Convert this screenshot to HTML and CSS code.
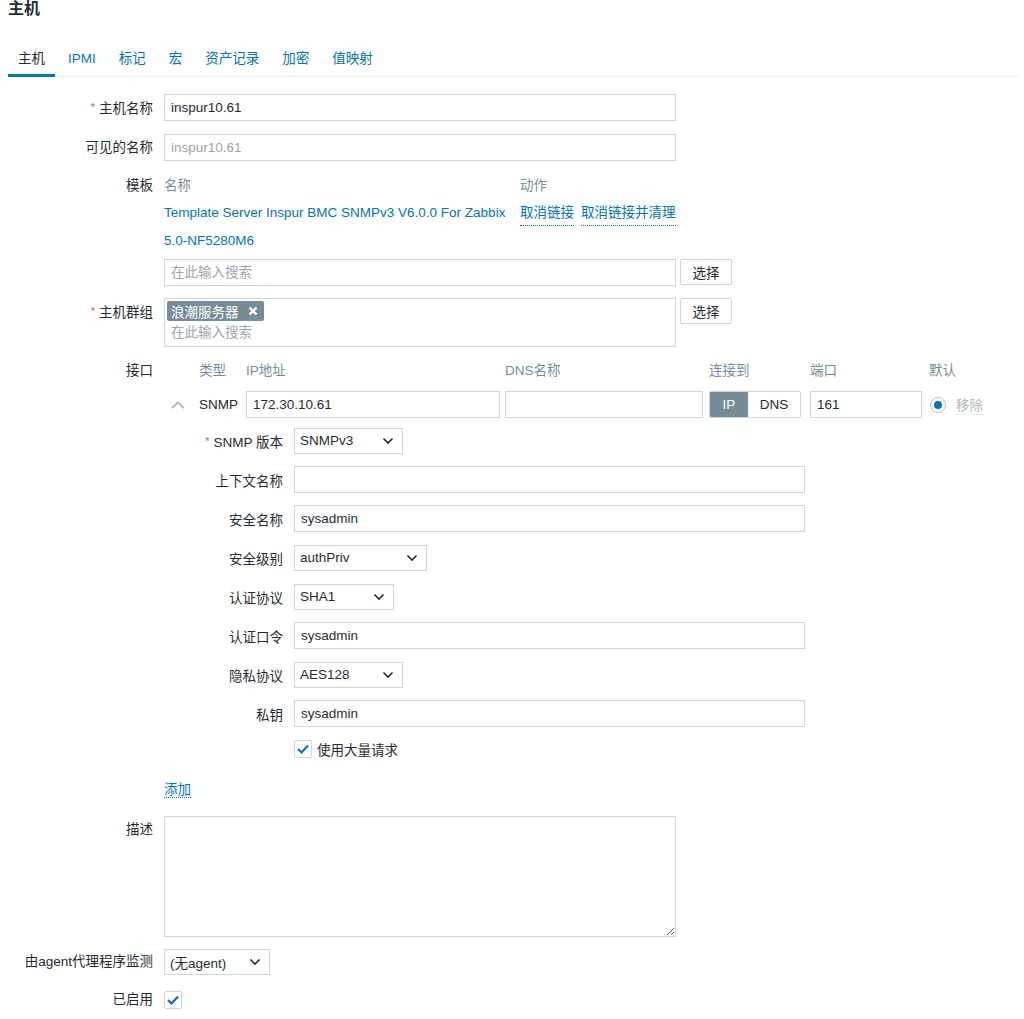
FILE: index.html
```html
<!DOCTYPE html>
<html lang="zh-CN">
<head>
    <meta charset="UTF-8">
    <title>主机</title>
    <link rel="stylesheet" href="styles.css">
</head>
<body>
<div class="page">
    <h1 class="title">主机</h1>

    <ul class="tabs">
        <li class="active">主机</li>
        <li>IPMI</li>
        <li>标记</li>
        <li>宏</li>
        <li>资产记录</li>
        <li>加密</li>
        <li>值映射</li>
    </ul>

    <form class="form">
        <div class="row">
            <label class="label"><span class="req">*</span>主机名称</label>
            <div class="field"><input type="text" class="text w512" value="inspur10.61"></div>
        </div>

        <div class="row">
            <label class="label">可见的名称</label>
            <div class="field"><input type="text" class="text w512" placeholder="inspur10.61"></div>
        </div>

        <div class="row">
            <label class="label label-top">模板</label>
            <div class="field">
                <div class="tpl-head">
                    <span class="tpl-name">名称</span>
                    <span>动作</span>
                </div>
                <div class="tpl-row">
                    <span class="tpl-name"><a class="link">Template Server Inspur BMC SNMPv3 V6.0.0 For Zabbix 5.0-NF5280M6</a></span>
                    <span class="tpl-actions">
                        <a class="link dotted">取消链接</a>
                        <a class="link dotted">取消链接并清理</a>
                    </span>
                </div>
                <div class="with-btn tpl-search">
                    <input type="text" class="text w512" placeholder="在此输入搜索">
                    <button type="button" class="btn">选择</button>
                </div>
            </div>
        </div>

        <div class="row">
            <label class="label"><span class="req">*</span>主机群组</label>
            <div class="field with-btn">
                <div class="multiselect">
                    <span class="tag">浪潮服务器
                        <svg width="10" height="10" viewBox="0 0 10 10"><path d="M1.5 1.5 L8.5 8.5 M8.5 1.5 L1.5 8.5" stroke="#fff" stroke-width="2.4"/></svg>
                    </span>
                    <input type="text" class="ms-input" placeholder="在此输入搜索">
                </div>
                <button type="button" class="btn">选择</button>
            </div>
        </div>

        <div class="row row-iface">
            <label class="label label-head">接口</label>
            <div class="field">
                <div class="iface iface-head">
                    <span></span>
                    <span>类型</span>
                    <span>IP地址</span>
                    <span>DNS名称</span>
                    <span>连接到</span>
                    <span>端口</span>
                    <span>默认</span>
                </div>
                <div class="iface">
                    <span class="chev">
                        <svg width="16" height="10" viewBox="0 0 16 10"><path d="M2 8 L8 2.5 L14 8" fill="none" stroke="#acbbc2" stroke-width="2"/></svg>
                    </span>
                    <span>SNMP</span>
                    <input type="text" class="text w254" value="172.30.10.61">
                    <input type="text" class="text w198">
                    <span class="toggle"><span class="on">IP</span><span>DNS</span></span>
                    <input type="text" class="text w112" value="161">
                    <span class="default">
                        <span class="radio"></span>
                        <a class="remove">移除</a>
                    </span>
                </div>

                <div class="snmp">
                    <div class="srow">
                        <label class="slabel"><span class="req">*</span>SNMP 版本</label>
                        <div class="select w109"><span>SNMPv3</span><svg width="12" height="8" viewBox="0 0 12 8"><path d="M1.5 1.5 L6 6 L10.5 1.5" fill="none" stroke="#1f2c33" stroke-width="1.6"/></svg></div>
                    </div>
                    <div class="srow">
                        <label class="slabel">上下文名称</label>
                        <input type="text" class="text w511">
                    </div>
                    <div class="srow">
                        <label class="slabel">安全名称</label>
                        <input type="text" class="text w511" value="sysadmin">
                    </div>
                    <div class="srow">
                        <label class="slabel">安全级别</label>
                        <div class="select w133"><span>authPriv</span><svg width="12" height="8" viewBox="0 0 12 8"><path d="M1.5 1.5 L6 6 L10.5 1.5" fill="none" stroke="#1f2c33" stroke-width="1.6"/></svg></div>
                    </div>
                    <div class="srow">
                        <label class="slabel">认证协议</label>
                        <div class="select w100"><span>SHA1</span><svg width="12" height="8" viewBox="0 0 12 8"><path d="M1.5 1.5 L6 6 L10.5 1.5" fill="none" stroke="#1f2c33" stroke-width="1.6"/></svg></div>
                    </div>
                    <div class="srow">
                        <label class="slabel">认证口令</label>
                        <input type="text" class="text w511" value="sysadmin">
                    </div>
                    <div class="srow">
                        <label class="slabel">隐私协议</label>
                        <div class="select w109"><span>AES128</span><svg width="12" height="8" viewBox="0 0 12 8"><path d="M1.5 1.5 L6 6 L10.5 1.5" fill="none" stroke="#1f2c33" stroke-width="1.6"/></svg></div>
                    </div>
                    <div class="srow">
                        <label class="slabel">私钥</label>
                        <input type="text" class="text w511" value="sysadmin">
                    </div>
                    <div class="srow srow-check">
                        <span></span>
                        <span class="check-line">
                            <span class="checkbox"><svg width="14" height="12" viewBox="0 0 14 12"><path d="M2 6 L5.5 9.5 L12 2.5" fill="none" stroke="#0275b8" stroke-width="2.2"/></svg></span>
                            使用大量请求
                        </span>
                    </div>
                </div>

                <div class="add"><a class="link dotted">添加</a></div>
            </div>
        </div>

        <div class="row">
            <label class="label">描述</label>
            <div class="field"><textarea class="textarea"></textarea></div>
        </div>

        <div class="row">
            <label class="label label-26">由agent代理程序监测</label>
            <div class="field">
                <div class="select w106"><span>(无agent)</span><svg width="12" height="8" viewBox="0 0 12 8"><path d="M1.5 1.5 L6 6 L10.5 1.5" fill="none" stroke="#1f2c33" stroke-width="1.6"/></svg></div>
            </div>
        </div>

        <div class="row row-last">
            <label class="label label-26">已启用</label>
            <div class="field field-center">
                <span class="checkbox"><svg width="14" height="12" viewBox="0 0 14 12"><path d="M2 6 L5.5 9.5 L12 2.5" fill="none" stroke="#0275b8" stroke-width="2.2"/></svg></span>
            </div>
        </div>
    </form>
</div>
</body>
</html>
```

FILE: styles.css
```css
/* Host edit form */
* {
    margin: 0;
    padding: 0;
    box-sizing: border-box;
}

body {
    font-family: "Liberation Sans", Arial, "Noto Sans CJK SC", sans-serif;
    font-size: 13.5px;
    color: #1f2c33;
    background-color: #ffffff;
}

.page {
    padding: 0 4px 0 8px;
}

.title {
    font-size: 16px;
    font-weight: bold;
    line-height: 18px;
}

/* tabs */
.tabs {
    list-style: none;
    display: flex;
    margin-top: 30px;
    border-bottom: 1px solid #ebeef0;
}

.tabs li {
    padding: 0 10px 4px;
    margin-right: 3px;
    line-height: 22px;
    color: #0275b8;
    border-bottom: 3px solid transparent;
    margin-bottom: -1px;
}

.tabs li.active {
    color: #1f2c33;
    border-bottom-color: #0275b8;
}

/* form rows */
.form {
    padding-top: 17px;
}

.row {
    display: grid;
    grid-template-columns: 145px 1fr;
    column-gap: 11px;
    margin-bottom: 12px;
}

.row-last {
    margin-top: 1px;
}

.label {
    text-align: right;
    line-height: 27px;
    white-space: nowrap;
}

.label-top {
    padding-top: 4px;
    line-height: 18px;
}

.label-head {
    line-height: 24px;
}

.label-26 {
    line-height: 26px;
}

.req {
    color: #e45959;
    font-size: 11px;
    margin-right: 4px;
    vertical-align: 2px;
}

.field-center {
    display: flex;
    align-items: center;
}

/* inputs */
.text {
    height: 27px;
    border: 1px solid #cdd6dc;
    padding: 0 6px;
    font: inherit;
    color: #1f2c33;
    background-color: #fff;
    outline: none;
}

.text::placeholder,
.ms-input::placeholder {
    color: #9aa6ad;
}

.w512 { width: 512px; }
.w511 { width: 511px; }
.w254 { width: 254px; }
.w198 { width: 198px; }
.w112 { width: 112px; }
.w133 { width: 133px; }
.w109 { width: 109px; }
.w106 { width: 106px; }
.w100 { width: 100px; }

.select {
    height: 26px;
    border: 1px solid #cdd6dc;
    padding: 0 8px 0 5px;
    display: flex;
    align-items: center;
    justify-content: space-between;
    background-color: #fff;
}

.btn {
    height: 26px;
    width: 52px;
    border: 1px solid #cdd6dc;
    border-radius: 2px;
    background-color: #fff;
    font: inherit;
    color: #1f2c33;
}

.with-btn {
    display: flex;
    align-items: flex-start;
    gap: 4px;
}

.link {
    color: #0275b8;
    text-decoration: none;
}

.dotted {
    border-bottom: 1px dotted #0275b8;
}

/* templates */
.tpl-head,
.tpl-row {
    display: flex;
}

.tpl-head {
    padding-top: 4px;
    line-height: 18px;
    color: #768d99;
}

.tpl-row {
    margin-top: 4px;
    line-height: 28px;
}

.tpl-name {
    width: 356px;
    padding-right: 8px;
}

.tpl-actions {
    display: flex;
    gap: 7px;
    align-items: flex-start;
    line-height: 24px;
    padding-top: 2px;
}

.tpl-search {
    margin-top: 4px;
}

/* host groups */
.multiselect {
    width: 512px;
    height: 49px;
    border: 1px solid #cdd6dc;
    padding: 2px 2px;
}

.tag {
    display: inline-flex;
    align-items: center;
    gap: 9px;
    height: 20px;
    padding: 0 6px 0 4px;
    background-color: #768d99;
    color: #fff;
    border-radius: 2px;
}

.ms-input {
    display: block;
    border: none;
    outline: none;
    height: 23px;
    padding: 0 4px;
    font: inherit;
    width: 100%;
}

/* interfaces */
.row-iface {
    margin-bottom: 15px;
}

.iface {
    display: grid;
    grid-template-columns: 35px 47px 259px 204px 101px 119px auto;
    align-items: center;
}

.iface-head {
    line-height: 24px;
    color: #768d99;
    margin-bottom: 8px;
}

.chev {
    padding-left: 6px;
    display: flex;
}

.toggle {
    display: flex;
    width: 92px;
    height: 27px;
    border: 1px solid #cdd6dc;
    border-radius: 2px;
    overflow: hidden;
}

.toggle span {
    flex: 1;
    display: flex;
    align-items: center;
    justify-content: center;
}

.toggle .on {
    flex: 0 0 38px;
    background-color: #768d99;
    color: #fff;
}

.default {
    display: flex;
    align-items: center;
    gap: 10px;
    padding-left: 1px;
}

.radio {
    width: 16px;
    height: 16px;
    border: 1px solid #b7c4cb;
    border-radius: 50%;
    display: flex;
    align-items: center;
    justify-content: center;
}

.radio::after {
    content: "";
    width: 8px;
    height: 8px;
    border-radius: 50%;
    background-color: #0275b8;
}

.remove {
    color: #acbbc2;
    border-bottom: 1px dotted #cfd8dc;
}

/* snmp details */
.snmp {
    margin-top: 9px;
}

.srow {
    display: grid;
    grid-template-columns: 119px 1fr;
    column-gap: 11px;
    align-items: center;
    height: 27px;
    margin-bottom: 12px;
}

.srow .select {
    height: 26px;
}

.slabel {
    text-align: right;
    white-space: nowrap;
}

.srow-check {
    margin-top: 1px;
    height: 18px;
    margin-bottom: 0;
}

.check-line {
    display: flex;
    align-items: center;
    gap: 5px;
}

.checkbox {
    width: 18px;
    height: 18px;
    border: 1px solid #cdd6dc;
    border-radius: 2px;
    display: inline-flex;
    align-items: center;
    justify-content: center;
    background-color: #fff;
}

.add {
    padding-top: 22px;
    line-height: 22px;
}

.textarea {
    display: block;
    width: 512px;
    height: 121px;
    border: 1px solid #cdd6dc;
    font: inherit;
    padding: 4px 6px;
    outline: none;
}
```
